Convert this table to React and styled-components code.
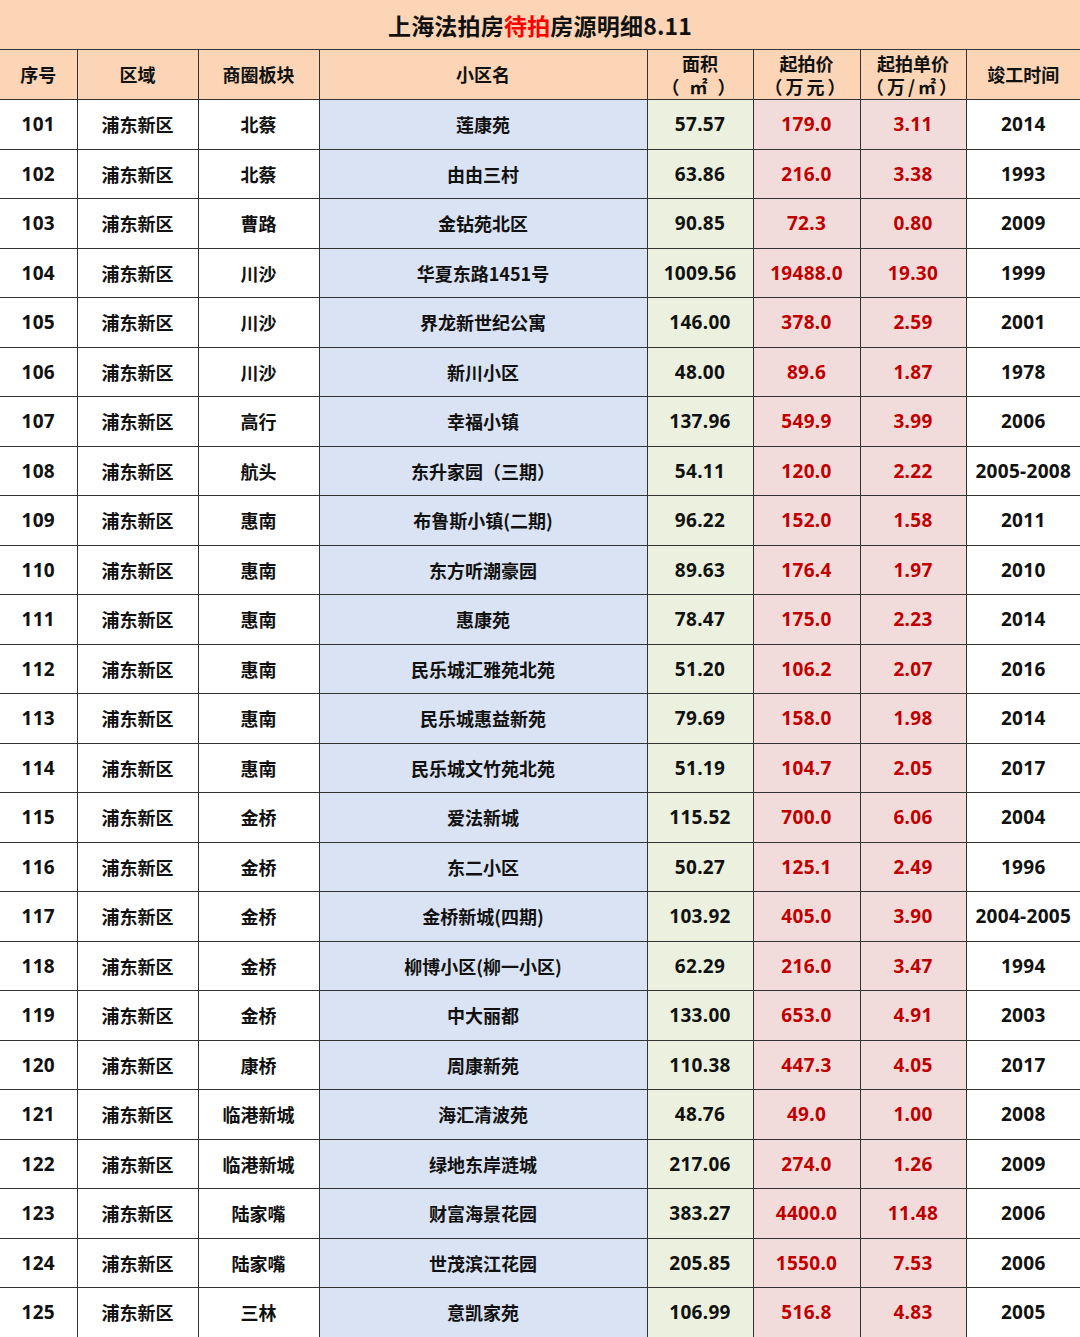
import React from 'react';
import styled, { createGlobalStyle } from 'styled-components';

const GlobalStyle = createGlobalStyle`
  html, body {
    margin: 0;
    padding: 0;
    background: #ffffff;
  }
  body {
    font-family: "Noto Sans CJK SC", "Noto Sans", sans-serif;
  }
`;

const rows = [
  ['101', '浦东新区', '北蔡', '莲康苑', '57.57', '179.0', '3.11', '2014'],
  ['102', '浦东新区', '北蔡', '由由三村', '63.86', '216.0', '3.38', '1993'],
  ['103', '浦东新区', '曹路', '金钻苑北区', '90.85', '72.3', '0.80', '2009'],
  ['104', '浦东新区', '川沙', '华夏东路1451号', '1009.56', '19488.0', '19.30', '1999'],
  ['105', '浦东新区', '川沙', '界龙新世纪公寓', '146.00', '378.0', '2.59', '2001'],
  ['106', '浦东新区', '川沙', '新川小区', '48.00', '89.6', '1.87', '1978'],
  ['107', '浦东新区', '高行', '幸福小镇', '137.96', '549.9', '3.99', '2006'],
  ['108', '浦东新区', '航头', '东升家园（三期）', '54.11', '120.0', '2.22', '2005-2008'],
  ['109', '浦东新区', '惠南', '布鲁斯小镇(二期)', '96.22', '152.0', '1.58', '2011'],
  ['110', '浦东新区', '惠南', '东方听潮豪园', '89.63', '176.4', '1.97', '2010'],
  ['111', '浦东新区', '惠南', '惠康苑', '78.47', '175.0', '2.23', '2014'],
  ['112', '浦东新区', '惠南', '民乐城汇雅苑北苑', '51.20', '106.2', '2.07', '2016'],
  ['113', '浦东新区', '惠南', '民乐城惠益新苑', '79.69', '158.0', '1.98', '2014'],
  ['114', '浦东新区', '惠南', '民乐城文竹苑北苑', '51.19', '104.7', '2.05', '2017'],
  ['115', '浦东新区', '金桥', '爱法新城', '115.52', '700.0', '6.06', '2004'],
  ['116', '浦东新区', '金桥', '东二小区', '50.27', '125.1', '2.49', '1996'],
  ['117', '浦东新区', '金桥', '金桥新城(四期)', '103.92', '405.0', '3.90', '2004-2005'],
  ['118', '浦东新区', '金桥', '柳博小区(柳一小区)', '62.29', '216.0', '3.47', '1994'],
  ['119', '浦东新区', '金桥', '中大丽都', '133.00', '653.0', '4.91', '2003'],
  ['120', '浦东新区', '康桥', '周康新苑', '110.38', '447.3', '4.05', '2017'],
  ['121', '浦东新区', '临港新城', '海汇清波苑', '48.76', '49.0', '1.00', '2008'],
  ['122', '浦东新区', '临港新城', '绿地东岸涟城', '217.06', '274.0', '1.26', '2009'],
  ['123', '浦东新区', '陆家嘴', '财富海景花园', '383.27', '4400.0', '11.48', '2006'],
  ['124', '浦东新区', '陆家嘴', '世茂滨江花园', '205.85', '1550.0', '7.53', '2006'],
  ['125', '浦东新区', '三林', '意凯家苑', '106.99', '516.8', '4.83', '2005'],
];

const columns = [77, 121, 121, 328, 106, 107, 106, 114];

// each column: background tint and text colour
const tints = ['#ffffff', '#ffffff', '#ffffff', '#dae3f3', '#ebf1de', '#f2dcdb', '#f2dcdb', '#ffffff'];
const inks = ['#111', '#111', '#111', '#111', '#111', '#c00000', '#c00000', '#111'];

const Sheet = styled.table`
  width: 1080px;
  border-collapse: collapse;
  table-layout: fixed;
  font-weight: 700;
  color: #111;
`;

const TitleCell = styled.th`
  height: 49px;
  padding: 0;
  background: #fbd5b6;
  font-size: 23px;
  font-weight: 700;
  letter-spacing: 0.2px;
  border-bottom: 1.5px solid #333;
`;

const Red = styled.span`
  color: #ff0000;
`;

const HeadCell = styled.th`
  height: 49px;
  padding: 0;
  background: #fbd5b6;
  font-size: 18px;
  font-weight: 700;
  line-height: 23px;
  text-align: center;
  border: 1.5px solid #333;
  &:first-child { border-left: none; }
  &:last-child { border-right: none; }
`;

const Gap = styled.span`
  letter-spacing: 3px;
`;

const Row = styled.tr`
  height: 49.5px;
`;

const Cell = styled.td`
  padding: 0;
  text-align: center;
  font-size: 18px;
  white-space: nowrap;
  background: ${p => p.$tint};
  color: ${p => p.$ink};
  border: 1.5px solid #333;
  &:first-child { border-left: none; }
  &:last-child { border-right: none; }
`;

const Num = styled(Cell)`
  font-family: "Noto Sans", "Noto Sans CJK SC", sans-serif;
  font-size: 19px;
  letter-spacing: 0.3px;
`;

export default function App() {
  return (
    <>
      <GlobalStyle />
      <Sheet>
        <colgroup>
          {columns.map((w, i) => <col key={i} style={{ width: w }} />)}
        </colgroup>
        <thead>
          <tr>
            <TitleCell colSpan={8}>
              上海法拍房<Red>待拍</Red>房源明细8.11
            </TitleCell>
          </tr>
          <tr>
            <HeadCell>序号</HeadCell>
            <HeadCell>区域</HeadCell>
            <HeadCell>商圈板块</HeadCell>
            <HeadCell>小区名</HeadCell>
            <HeadCell>面积<br /><Gap>（ ㎡ ）</Gap></HeadCell>
            <HeadCell>起拍价<br /><Gap>（万元）</Gap></HeadCell>
            <HeadCell>起拍单价<br /><Gap>（万/㎡）</Gap></HeadCell>
            <HeadCell>竣工时间</HeadCell>
          </tr>
        </thead>
        <tbody>
          {rows.map(r => (
            <Row key={r[0]}>
              {r.map((v, i) => {
                const C = [1, 2, 3].includes(i) ? Cell : Num;
                return <C key={i} $tint={tints[i]} $ink={inks[i]}>{v}</C>;
              })}
            </Row>
          ))}
        </tbody>
      </Sheet>
    </>
  );
}
